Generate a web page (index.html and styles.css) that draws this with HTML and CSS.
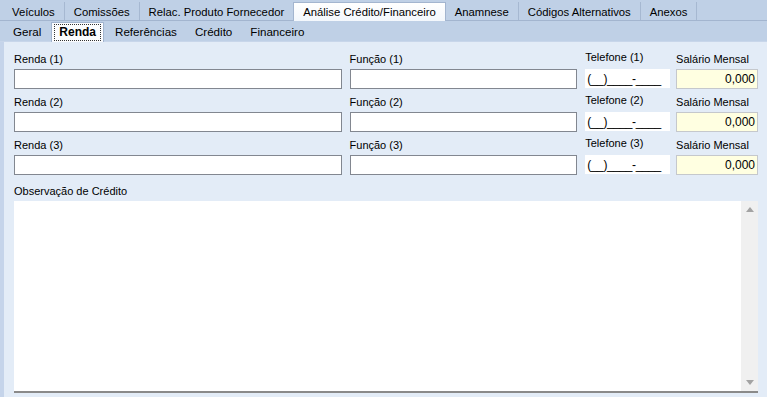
FILE: index.html
```html
<!DOCTYPE html>
<html lang="pt-BR">
<head>
    <meta charset="UTF-8">
    <title>Análise Crédito/Financeiro</title>
    <link rel="stylesheet" href="styles.css">
</head>
<body>
<div class="tabs main-tabs">
    <div class="tab">Veículos</div>
    <div class="tab">Comissões</div>
    <div class="tab">Relac. Produto Fornecedor</div>
    <div class="tab active">Análise Crédito/Financeiro</div>
    <div class="tab">Anamnese</div>
    <div class="tab">Códigos Alternativos</div>
    <div class="tab">Anexos</div>
</div>
<div class="tabs sub-tabs">
    <div class="subtab">Geral</div>
    <div class="subtab active"><span>Renda</span></div>
    <div class="subtab">Referências</div>
    <div class="subtab">Crédito</div>
    <div class="subtab">Financeiro</div>
</div>
<div id="content">
    <!-- renda rows -->
    <div class="row">
        <div class="field renda"><label>Renda (1)</label><div class="box"></div></div>
        <div class="field funcao"><label>Função (1)</label><div class="box"></div></div>
        <div class="field fone"><label>Telefone (1)</label><div class="mask">(__)____-____</div></div>
        <div class="field salario"><label>Salário Mensal</label><div class="box money">0,000</div></div>
    </div>
    <div class="row">
        <div class="field renda"><label>Renda (2)</label><div class="box"></div></div>
        <div class="field funcao"><label>Função (2)</label><div class="box"></div></div>
        <div class="field fone"><label>Telefone (2)</label><div class="mask">(__)____-____</div></div>
        <div class="field salario"><label>Salário Mensal</label><div class="box money">0,000</div></div>
    </div>
    <div class="row">
        <div class="field renda"><label>Renda (3)</label><div class="box"></div></div>
        <div class="field funcao"><label>Função (3)</label><div class="box"></div></div>
        <div class="field fone"><label>Telefone (3)</label><div class="mask">(__)____-____</div></div>
        <div class="field salario"><label>Salário Mensal</label><div class="box money">0,000</div></div>
    </div>

    <label class="obs-label">Observação de Crédito</label>
    <div class="memo">
        <div class="scrollbar">
            <span class="arrow up"></span>
            <span class="arrow down"></span>
        </div>
    </div>
</div>
</body>
</html>
```

FILE: styles.css
```css
/* General Styles */
body {
    margin: 0;
    width: 767px;
    height: 397px;
    overflow: hidden;
    background-color: #bfd0e6;
    font-family: "Liberation Sans", Arial, sans-serif;
    font-size: 11px;
    color: #000;
}

/* Tabs */
.tabs {
    display: flex;
    height: 21px;
    box-sizing: border-box;
    border-bottom: 1px solid #a3b5cf;
    font-size: 11.3px;
}

.main-tabs {
    padding-left: 3px;
}

.tab {
    padding: 3px 9px 0 9px;
    border-right: 1px solid #a6b8d1;
    line-height: 15px;
    margin-top: 2px;
}

.tab.active {
    background: linear-gradient(#ffffff, #f3f7fc);
    border: 1px solid #a3b5cf;
    border-bottom: none;
    margin-bottom: -1px;
    margin-left: -1px;
    padding-top: 2px;
}

.sub-tabs {
    padding-left: 4px;
    border-bottom-color: #c8d6ea;
    font-size: 11.6px;
}

.subtab {
    padding: 3px 9px 0 9px;
    line-height: 15px;
}

.subtab.active {
    background-color: #fbfcfe;
    border: 1px solid #a3b5cf;
    border-bottom: none;
    margin: 1px 2px -1px 1px;
    padding: 1px 2px 0 2px;
    font-weight: bold;
    font-size: 12px;
}

.subtab.active span {
    display: inline-block;
    border: 1px dotted #333;
    padding: 0 4px;
    line-height: 15px;
}

/* Content */
#content {
    background-color: #e3ecf7;
    border-left: 4px solid #c5d4ea;
    padding: 10px 9px 0 10px;
    height: 355px;
    box-sizing: border-box;
}

.row {
    display: flex;
    height: 43px;
}

.field {
    display: flex;
    flex-direction: column;
    margin-right: 8px;
}

.field label {
    height: 15px;
    line-height: 15px;
    margin-bottom: 2px;
}

.renda { width: 328px; }
.funcao { width: 228px; }
.fone { width: 85px; margin-right: 6px; }
.salario { width: 82px; margin-right: 0; }

.fone label {
    margin-top: -2px;
    margin-bottom: 4px;
}

.box {
    height: 20px;
    box-sizing: border-box;
    background-color: #fff;
    border: 1px solid #828790;
}

.mask {
    height: 19px;
    box-sizing: border-box;
    background-color: #fff;
    padding: 3px 0 0 2px;
    line-height: 15px;
    font-size: 12px;
    letter-spacing: -0.4px;
}

.money {
    background-color: #ffffe1;
    border-color: #c5c8cc;
    text-align: right;
    padding: 2px 2px 0 0;
    line-height: 15px;
    font-size: 12px;
}

.obs-label {
    display: block;
    margin-top: 3px;
    height: 15px;
    line-height: 15px;
}

.memo {
    margin-top: 2px;
    height: 190px;
    background-color: #fff;
    border-bottom: 2px solid #8a8a8a;
    display: flex;
    justify-content: flex-end;
}

.scrollbar {
    width: 17px;
    background-color: #f0f0f0;
    display: flex;
    flex-direction: column;
    justify-content: space-between;
    align-items: center;
    padding: 6px 0 6px 0;
}

.arrow {
    width: 0;
    height: 0;
    border-left: 4px solid transparent;
    border-right: 4px solid transparent;
}

.arrow.up {
    border-bottom: 5px solid #a3a3a3;
}

.arrow.down {
    border-top: 5px solid #a3a3a3;
}
```
